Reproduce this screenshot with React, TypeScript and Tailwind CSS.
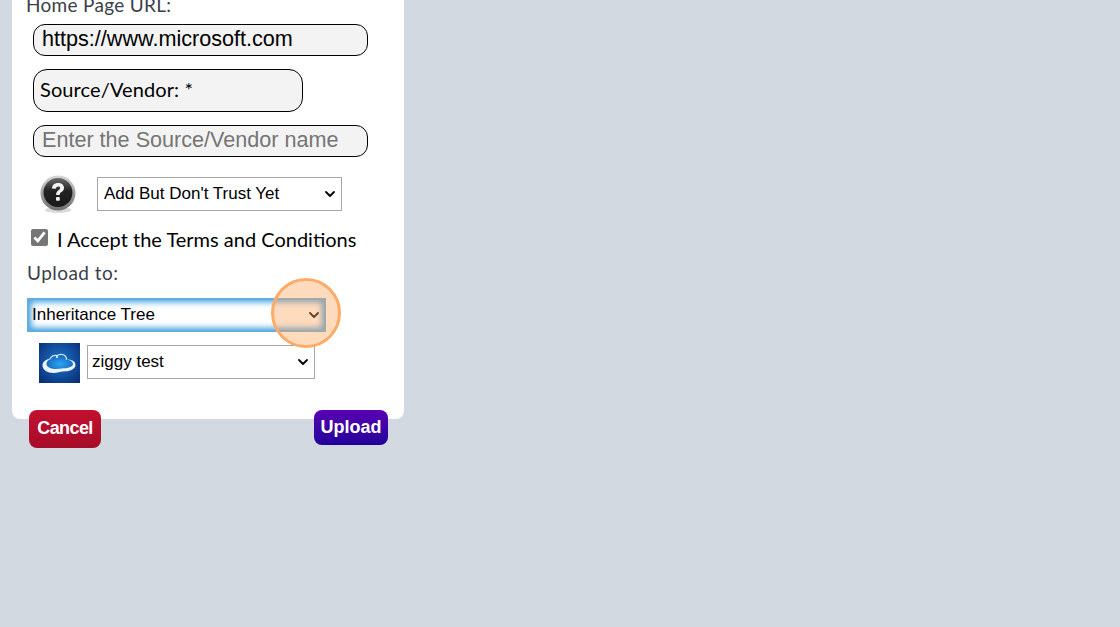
import React from "react";
import { ChevronDown } from "lucide-react";

const QuestionIcon = () => (
  <svg width="40" height="40" viewBox="0 0 40 40" className="shrink-0">
    <defs>
      <linearGradient id="ring" x1="0" y1="0" x2="0" y2="1">
        <stop offset="0" stopColor="#d8d8d8" />
        <stop offset="0.55" stopColor="#9a9a9a" />
        <stop offset="1" stopColor="#6f6f6f" />
      </linearGradient>
      <linearGradient id="ball" x1="0" y1="0" x2="0" y2="1">
        <stop offset="0" stopColor="#6a6a6a" />
        <stop offset="0.45" stopColor="#222" />
        <stop offset="1" stopColor="#1a1a1a" />
      </linearGradient>
    </defs>
    <ellipse cx="20" cy="36" rx="13" ry="3" fill="#d9d9d9" />
    <circle cx="20" cy="19" r="17.500" fill="url(#ring)" />
    <circle cx="20" cy="18.500" r="14.500" fill="url(#ball)" />
    <path d="M14 14.500c0-3.400 2.500-5.500 6-5.500s6 2 6 4.900c0 2.200-1.300 3.300-2.800 4.400-1.200.8-1.500 1.300-1.500 2.700h-3.600c0-2.400.7-3.400 2.200-4.500 1.100-.8 1.900-1.400 1.900-2.400s-.8-1.700-2-1.700c-1.400 0-2.300.9-2.400 2.400z" fill="#f4f4f4" />
    <rect x="18" y="23" width="3.800" height="3.800" rx="1" fill="#f4f4f4" />
  </svg>
);

const CloudLogo = () => (
  <svg width="41" height="40" viewBox="0 0 41 40" className="shrink-0">
    <defs>
      <radialGradient id="sky" cx="0.5" cy="0.45" r="0.7">
        <stop offset="0" stopColor="#1a78cf" />
        <stop offset="1" stopColor="#0a2c74" />
      </radialGradient>
      <radialGradient id="core" cx="0.5" cy="0.6" r="0.6">
        <stop offset="0" stopColor="#2fa6f5" />
        <stop offset="1" stopColor="#0f5fb5" />
      </radialGradient>
    </defs>
    <rect width="41" height="40" fill="url(#sky)" />
    <path d="M10 17c1-3.500 4.500-5 7.500-4 2-2 6.500-2.200 8.500-.2 1.300 1.300 1.800 2.800 1.800 4.200 3.500.3 7.200 1.800 7.200 4.500 0 3-4.500 5-10 5.500-4 .4-8 .5-11 0-4-.6-7-3-7-5.500 0-2.300 1.500-4 3.500-4.500z" fill="url(#core)" />
    <path d="M11.500 15.500C6.500 16.500 3.500 19 3.500 22.500c0 4.500 5 7.500 11 7.500 2 0 4-.3 6-1 2-.6 4-.8 6-.8 5 0 10-2.500 10-6.500 0-3.500-4-5.200-9-5.200 4 .6 6.500 2.300 6.500 4.500 0 2.700-4.500 4-9.500 4.300-4 .3-7.500 1-10.500.5-4-.6-6.500-2.500-6.500-4.800 0-2.300 1.500-4 4-5z" fill="#eef3f8" />
    <path d="M11 16c1.200-3 4.300-4.300 7-3.300 2-1.900 7-2 8.600.6.800 1.100 1 2.300 1 3.400" fill="none" stroke="#d6e2ee" strokeWidth="1.300" />
    <circle cx="18" cy="14" r="1.100" fill="#eef3f8" />
  </svg>
);

export default function App() {
  return (
    <div className="relative h-[627px] w-[1120px] overflow-hidden bg-[#d2d9e0] font-['Lato',sans-serif]">
      <div className="ml-3 -mt-[7px] h-[426px] w-[392px] rounded-b-lg bg-white pl-[14px]">
        <div className="text-[19px] leading-6 tracking-[0.3px] text-[#3a4048]">Home Page URL:</div>
        <input
          readOnly
          value="https://www.microsoft.com"
          className="mt-[7px] ml-[7px] block h-8 w-[335px] rounded-[12px] border border-black bg-[#f3f3f3] px-2 pb-[2px] font-['Liberation_Sans',sans-serif] text-[21.6px] text-black"
        />
        <div className="mt-[13px] ml-[7px] flex h-[43px] w-[270px] items-center rounded-[14px] border border-black bg-[#f3f3f3] px-[6px] pb-[3px] text-[20px] tracking-[0.1px] text-black">
          Source/Vendor: *
        </div>
        <input
          readOnly
          placeholder="Enter the Source/Vendor name"
          className="mt-[13px] ml-[7px] block h-8 w-[335px] rounded-[12px] border border-black bg-[#f3f3f3] px-2 pb-[2px] font-['Liberation_Sans',sans-serif] text-[21.6px] placeholder:text-[#757575]"
        />
        <div className="mt-[17px] ml-[12px] flex items-center gap-[19px]">
          <QuestionIcon />
          <div className="relative">
            <select className="block h-[34px] w-[245px] appearance-none border border-[#a6a6a6] bg-white pl-[6px] font-['Liberation_Sans',sans-serif] text-[17px] text-black">
              <option>Add But Don't Trust Yet</option>
            </select>
            <ChevronDown size={16} strokeWidth={2.75} className="pointer-events-none absolute right-[4px] top-[9px] text-black" />
          </div>
        </div>
        <div className="mt-[10px] ml-[5px] flex items-start gap-[9px]">
          <input type="checkbox" defaultChecked readOnly className="mt-[5px] h-[17px] w-[17px] accent-[#767676]" />
          <span className="pt-[1px] text-[20px] leading-7 text-black">I Accept the Terms and Conditions</span>
        </div>
        <div className="mt-[6px] pl-[1px] text-[19px] leading-7 tracking-[0.45px] text-[#3a4048]">Upload to:</div>
        <div className="relative mt-[11px] ml-[1px] w-[299px]">
          <select className="block h-[34px] w-full appearance-none border-2 border-[#62aee0] bg-white pl-[3px] font-['Liberation_Sans',sans-serif] text-[17px] text-black shadow-[inset_0_0_6px_2px_#3a9fe0]">
            <option>Inheritance Tree</option>
          </select>
          <ChevronDown size={16} strokeWidth={2.75} className="pointer-events-none absolute right-[4px] top-[9px] text-black" />
        </div>
        <div className="mt-[11px] ml-[13px] flex items-start gap-[7px]">
          <CloudLogo />
          <div className="relative mt-[2px]">
            <select className="block h-[34px] w-[228px] appearance-none border border-[#a6a6a6] bg-white pl-[4px] font-['Liberation_Sans',sans-serif] text-[17px] text-black">
              <option>ziggy test</option>
            </select>
            <ChevronDown size={16} strokeWidth={2.75} className="pointer-events-none absolute right-[4px] top-[9px] text-black" />
          </div>
        </div>
      </div>
      <div className="ml-[29px] -mt-[9px] flex w-[359px] items-start justify-between font-['Liberation_Sans',sans-serif] text-[18px] font-bold text-white [text-shadow:0_0_1px_#fff]">
        <button className="flex h-[38px] w-[72px] items-center justify-center rounded-lg bg-gradient-to-b from-[#c4102f] to-[#a50d29] pb-[2px] tracking-[-0.6px]">
          Cancel
        </button>
        <button className="flex h-[35px] w-[74px] items-center justify-center rounded-lg bg-gradient-to-b from-[#5a00b4] to-[#22009a]">
          Upload
        </button>
      </div>
      <div className="absolute left-[271px] top-[278px] h-[70px] w-[70px] rounded-full border-[3px] border-[#ffab66] bg-[#ffa45c]/40" />
    </div>
  );
}
